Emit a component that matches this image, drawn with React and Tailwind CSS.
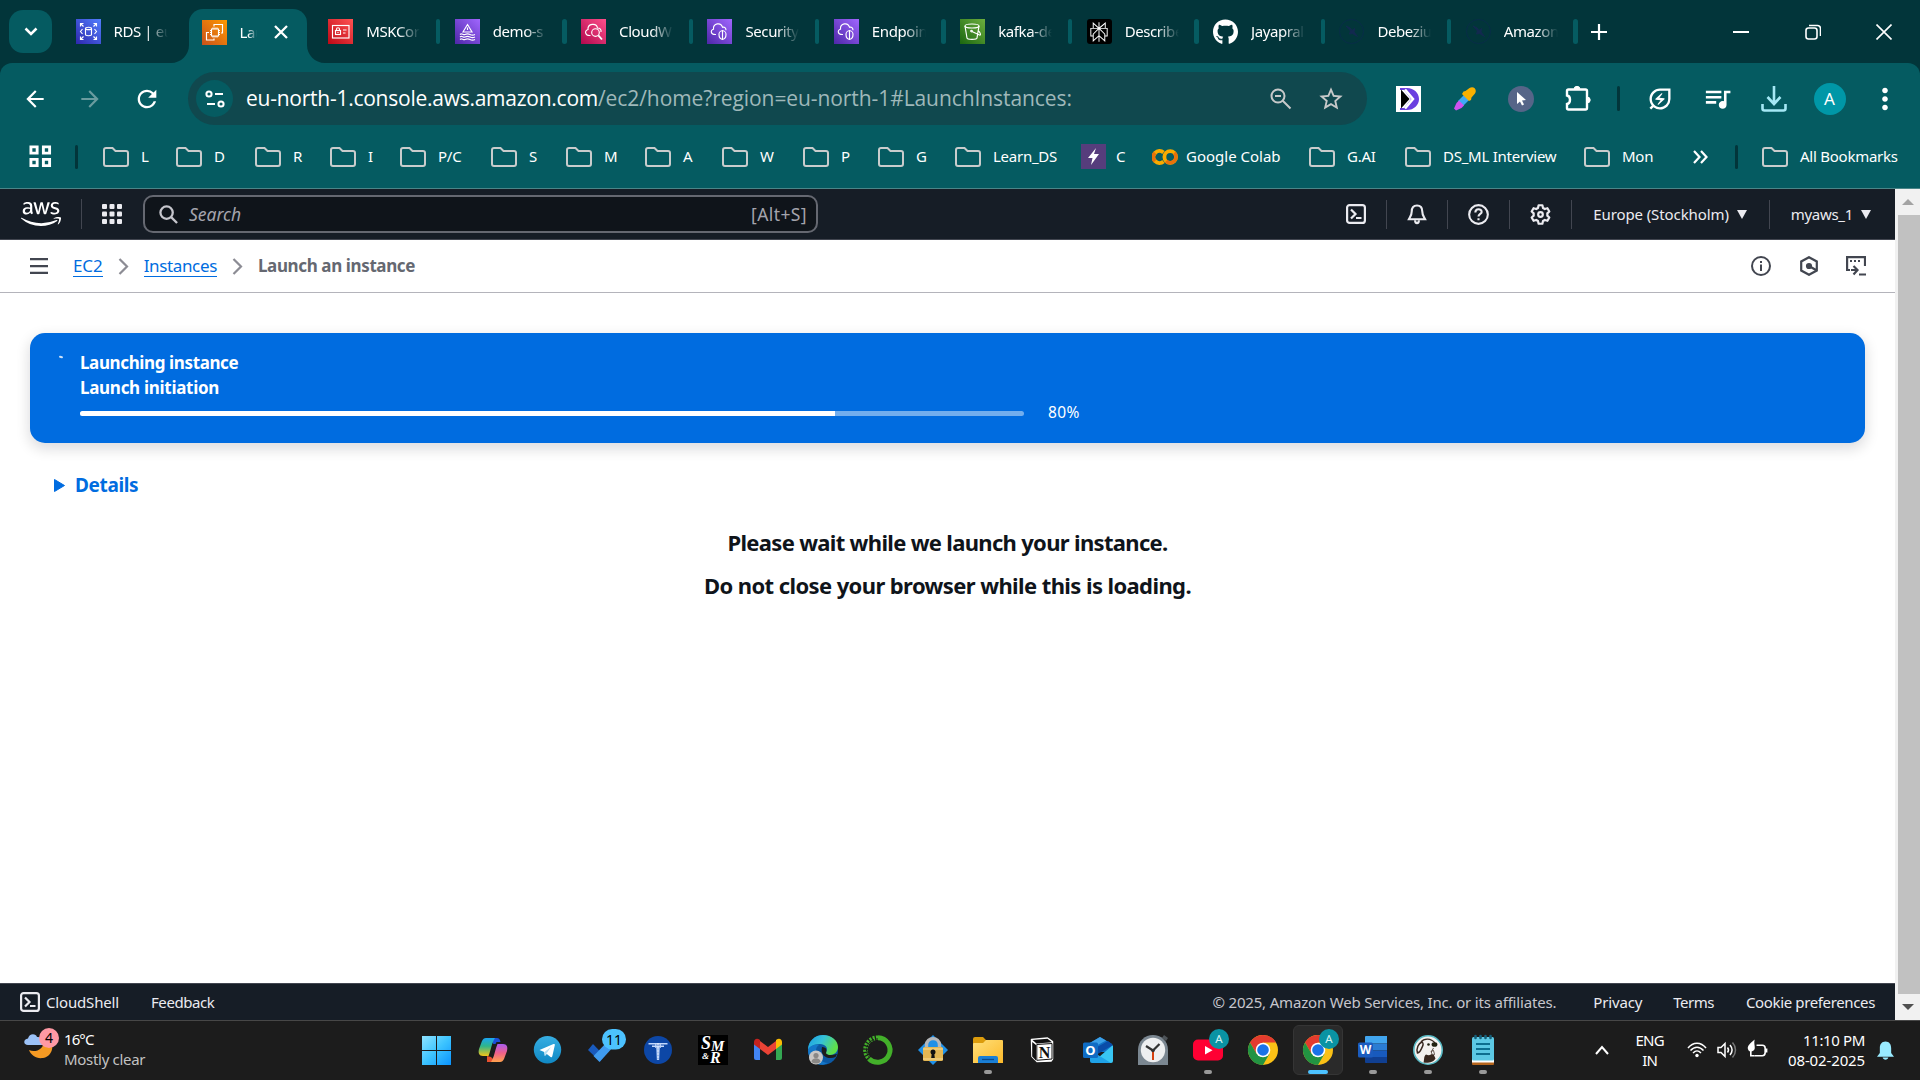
import {
  MdArrowBack,
  MdArrowForward,
  MdRefresh,
  MdStarBorder,
  MdOutlineEnergySavingsLeaf,
  MdQueueMusic,
  MdMoreVert,
} from "react-icons/md";
import { FaAws, FaGithub } from "react-icons/fa";
import { SiPerplexity } from "react-icons/si";

/* ---------- tab favicons ---------- */

function Tile({ from, to, children }) {
  return (
    <svg viewBox="0 0 25 25" className="h-[25px] w-[25px]" fill="none" stroke="#fff" strokeWidth="1.15">
      <defs>
        <linearGradient id={"g" + from.slice(1)} x1="0" y1="1" x2="1" y2="0">
          <stop offset="0" stopColor={from} />
          <stop offset="1" stopColor={to} />
        </linearGradient>
      </defs>
      <rect width="25" height="25" fill={`url(#g${from.slice(1)})`} stroke="none" />
      {children}
    </svg>
  );
}

const RdsIcon = () => (
  <Tile from="#2E27AD" to="#527FFF">
    <ellipse cx="12.5" cy="9.4" rx="3" ry="1.2" />
    <path d="M9.500 9.400v6.200c0 1.500 6 1.500 6 0V9.400M4.500 7.500v-3h3M4.500 4.500l3 3M17.500 4.500h3v3M20.500 4.500l-3 3M4.500 17.500v3h3M4.500 20.500l3-3M17.500 20.500h3v-3M20.500 20.500l-3-3M6.500 10l-2 2.500 2 2.500M18.500 10l2 2.500-2 2.500" />
  </Tile>
);
const Ec2Icon = () => (
  <Tile from="#C8511B" to="#FF9900">
    <path d="M9.500 9h7v7h-7zM11 7.500V9M13 7.500V9M15 7.500V9M11 16v1.500M13 16v1.500M15 16v1.500M8 10.500h1.500M8 12.500h1.500M8 14.500h1.500M16.500 10.500H18M16.500 12.500H18M16.500 14.500H18" />
    <path d="M12 6.500v-2h8.500V13H19M7 12.500H4.500V20H12v-1.500" />
  </Tile>
);
const IamIcon = () => (
  <Tile from="#BD0816" to="#FF5252">
    <rect x="4.500" y="6.500" width="16.500" height="12.500" />
    <rect x="7.500" y="11.500" width="5" height="4" />
    <path d="M8.500 11.500V10c0-1.700 3-1.700 3 0v1.500M15 11h3.500M15 14h2.500M10 13v1" />
  </Tile>
);
const MskIcon = () => (
  <Tile from="#4D27A8" to="#A166FF">
    <path d="M12.500 5.500l4.500 7.500H8zM12.500 8.500V11M5 15.500c2-2 3 1 5 0s3-1 5 0 3 1 5 0M5 18c2-2 3 1 5 0s3-1 5 0 3 1 5 0M5 20.500c2-2 3 1 5 0s3-1 5 0 3 1 5 0" />
  </Tile>
);
const CloudWatchIcon = () => (
  <Tile from="#B0084D" to="#FF4F8B">
    <path d="M9.500 16.500C4 17 3 11.500 7 10.500c-.5-6 8.500-7 9.500-1.500 2.500 0 4 1.500 3.500 4" />
    <circle cx="14.500" cy="13.500" r="3.800" />
    <path d="M17.300 16.300l3.700 4.200" strokeWidth="1.800" />
  </Tile>
);
const VpcIcon = () => (
  <Tile from="#4D27A8" to="#A166FF">
    <path d="M9 15.500C3.500 16 3 11 6.500 10.200 6 4 14 3 15.500 8.200c2-.6 3.500.8 3.500 3" />
    <path d="M15.500 11.500c3 .8 3.500 1.500 3.500 4 0 3-1.500 4.500-3.500 5-2-.5-3.500-2-3.500-5 0-2.500.5-3.200 3.500-4zM15.500 11.500v9" />
  </Tile>
);
const S3Icon = () => (
  <Tile from="#1B660F" to="#6CAE3E">
    <ellipse cx="12" cy="7" rx="7" ry="2" />
    <path d="M5 7l2 12c0 1.800 10 1.800 10 0l2-12M12 12.500l7.500 3.500c2 .5.500-3-1-4" />
    <circle cx="11.500" cy="12" r=".8" />
  </Tile>
);
const PerplexityIcon = () => (
  <div className="flex h-[25px] w-[25px] items-center justify-center rounded-[3px] bg-black">
    <SiPerplexity className="h-5 w-5 text-white" />
  </div>
);
const GithubIcon = () => <FaGithub className="h-[26px] w-[26px] text-white" />;
const FaintIcon = () => (
  <svg viewBox="0 0 25 25" className="h-[25px] w-[25px]" fill="none" stroke="#082d48" strokeWidth="1">
    <circle cx="12.500" cy="12.500" r="12" />
    <path d="M7 7l4 2 2 2.500 2.500-2-.5 3.500 3.500 4.500-5-3-3 .5 1-3z" fill="#12294f" stroke="#12294f" />
  </svg>
);

const TABS = [
  { icon: RdsIcon, label: "RDS | eu" },
  { icon: Ec2Icon, label: "Lau", active: true },
  { icon: IamIcon, label: "MSKCor", sep: true },
  { icon: MskIcon, label: "demo-s", sep: true },
  { icon: CloudWatchIcon, label: "CloudW", sep: true },
  { icon: VpcIcon, label: "Security", sep: true },
  { icon: VpcIcon, label: "Endpoin", sep: true },
  { icon: S3Icon, label: "kafka-de", sep: true },
  { icon: PerplexityIcon, label: "Describe", sep: true },
  { icon: GithubIcon, label: "Jayapral", sep: true },
  { icon: FaintIcon, label: "Debeziu", sep: true },
  { icon: FaintIcon, label: "Amazon", sep: true },
];

function Tab({ icon: Icon, label, active, sep }) {
  if (active) {
    return (
      <div className="relative flex h-full w-[126.400px] shrink-0 pt-[9px]">
        <div className="flex h-[54px] w-[118px] items-center rounded-t-[14px] bg-[#055b61] pb-[8px] pl-[13.600px]">
          <Icon />
          <div className="ml-3 w-[18px] overflow-hidden whitespace-nowrap [mask-image:linear-gradient(to_right,black_50%,transparent)]">
            {label}
          </div>
          <svg viewBox="0 0 14 14" className="ml-[17px] h-[14px] w-[14px]" stroke="#fff" strokeWidth="2.300">
            <path d="M1 1l12 12M13 1L1 13" />
          </svg>
        </div>
        <svg viewBox="0 0 18 18" className="absolute bottom-0 -left-[18px] h-[18px] w-[18px]" fill="#055b61">
          <path d="M18 0v18H0C10 18 18 10 18 0z" />
        </svg>
        <svg viewBox="0 0 18 18" className="absolute bottom-0 left-[118px] h-[18px] w-[18px]" fill="#055b61">
          <path d="M0 0v18h18C8 18 0 10 0 0z" />
        </svg>
      </div>
    );
  }
  return (
    <div className="flex h-full w-[126.400px] shrink-0 items-center pl-[13px]">
      <div className="flex w-[25px] justify-center">
        <Icon />
      </div>
      <div className="ml-[13px] w-[54px] overflow-hidden whitespace-nowrap [mask-image:linear-gradient(to_right,black_60%,transparent)]">
        {label}
      </div>
      {sep && <div className="ml-[15.500px] h-[25px] w-[4.500px] rounded-sm bg-[#055b61]" />}
    </div>
  );
}

function TabStrip() {
  return (
    <div className="flex h-[63px] items-center bg-[#02353a] text-[15px] tracking-[-0.4px]">
      <div className="ml-[9px] flex h-[43px] w-[43px] shrink-0 items-center justify-center rounded-[14px] bg-[#055b61]">
        <svg viewBox="0 0 14 9" className="h-[9px] w-[14px]" fill="none" stroke="#fff" strokeWidth="2.500">
          <path d="M1.500 1.500L7 7l5.500-5.500" />
        </svg>
      </div>
      <div className="ml-[10.500px] flex h-full">
        {TABS.map((t) => (
          <Tab key={t.label} {...t} />
        ))}
      </div>
      <svg viewBox="0 0 16 16" className="ml-[12px] h-[16px] w-[16px]" stroke="#fff" strokeWidth="2.200">
        <path d="M8 0v16M0 8h16" />
      </svg>
      <div className="mr-[28px] ml-auto flex items-center">
        <svg viewBox="0 0 16 2" className="h-[2px] w-[16px]" fill="#fff">
          <rect width="16" height="2" />
        </svg>
        <svg viewBox="0 0 16 16" className="ml-[56px] h-[16px] w-[16px]" fill="none" stroke="#fff" strokeWidth="1.600">
          <rect x="1" y="4" width="11" height="11" rx="2.500" />
          <path d="M4 1.500h8.500a3 3 0 0 1 3 3V12" />
        </svg>
        <svg viewBox="0 0 16 16" className="ml-[55px] h-[16px] w-[16px]" stroke="#fff" strokeWidth="1.600">
          <path d="M.5.5l15 15M15.500.5l-15 15" />
        </svg>
      </div>
    </div>
  );
}

/* ---------- address bar ---------- */

function Toolbar() {
  return (
    <div className="bg-[#02353a]">
      <div className="flex h-[71px] items-center rounded-t-[12px] bg-[#055b61] text-white">
        <MdArrowBack className="ml-[22px] h-[26px] w-[26px]" />
        <MdArrowForward className="ml-[29px] h-[26px] w-[26px] text-[#6a9c9f]" />
        <MdRefresh className="ml-[30px] h-[28px] w-[28px]" />
        <div className="ml-[27px] flex h-[53px] w-[1179px] items-center rounded-full bg-[#10484e]">
          <div className="ml-2 flex h-[37px] w-[37px] items-center justify-center rounded-full bg-[#055b61]">
            <svg viewBox="0 0 20 18" className="h-[18px] w-[20px]" fill="none" stroke="#fff" strokeWidth="2">
              <circle cx="4" cy="4" r="2.600" />
              <path d="M10 4h8M2 14h8" />
              <circle cx="16" cy="14" r="2.600" />
            </svg>
          </div>
          <div className="ml-[13px] font-['Open_Sans',sans-serif] text-[21px] whitespace-nowrap">
            <span className="tracking-[-0.25px]">eu-north-1.console.aws.amazon.com</span>
            <span className="tracking-[-0.08px] text-[#9fb8ba]">/ec2/home?region=eu-north-1#LaunchInstances:</span>
          </div>
          <svg viewBox="0 0 24 24" className="ml-auto h-[24px] w-[24px]" fill="none" stroke="#c7c9c9" strokeWidth="2">
            <circle cx="9" cy="9" r="6.500" />
            <path d="M13.500 13.500l8 8M6 9h6" />
          </svg>
          <MdStarBorder className="mr-[22px] ml-[24.500px] h-[28px] w-[28px] text-[#c7c9c9]" />
        </div>
        <svg viewBox="0 0 25 26" className="ml-[29px] h-[26px] w-[25px]">
          <rect width="25" height="26" fill="#fff" />
          <path d="M4 2h7c7 0 12 5 12 11s-5 11-12 11H4V22h4l7-9-7-9H4z" fill="#6b3fe0" />
          <path d="M9 3.500l8 9.500-8 9.500" fill="none" stroke="#fff" strokeWidth="2.500" />
          <path d="M5 3.500L13.500 13 5 22.500z" fill="#000" />
        </svg>
        <svg viewBox="0 0 24 24" className="ml-[32px] h-[24px] w-[24px]">
          <path d="M5 14l7-7 5 5-7 7z" fill="#3fa9f5" />
          <path d="M3.500 16l2.500-2.500 5 5L8.500 21 3 23.500l-2-2z" fill="#cf52f0" />
          <path d="M10.500 4.500l2-.5 4-3c4-2.500 8 1.500 5.500 5.500l-3.500 4-.5 2.500-2 1-7-7z" fill="#f9b000" />
        </svg>
        <svg viewBox="0 0 26 26" className="ml-[31px] h-[26px] w-[26px]">
          <circle cx="13" cy="13" r="13" fill="#566588" />
          <path d="M9 6v12l3-2.500 2 4 2-1-2-4 4-.5z" fill="#fff" />
        </svg>
        <svg viewBox="0 0 28 28" className="ml-[30px] h-[28px] w-[28px]" fill="none" stroke="#fff" strokeWidth="2.400">
          <path d="M3 6q0-1.500 1.500-1.500h17Q23 4.500 23 6v17q0 1.500-1.500 1.500h-17Q3 24.500 3 23v-4c4-.5 4-8 0-8.500z" />
          <path d="M10 4.500a3 3.200 0 0 1 6 0zM23 12a3.200 3 0 0 1 0 6z" fill="#fff" strokeWidth="1" />
        </svg>
        <div className="ml-[25px] h-[25px] w-[3px] rounded bg-[#02353a]" />
        <MdOutlineEnergySavingsLeaf className="ml-[26px] h-[28px] w-[28px]" />
        <MdQueueMusic className="ml-[28px] h-[31px] w-[31px]" />
        <svg viewBox="0 0 26 26" className="ml-[27.500px] h-[26px] w-[26px]" fill="none" stroke="#a5e8f5" strokeWidth="2.600">
          <path d="M13 0v17M6.500 11l6.500 7 6.500-7M1.500 18v4.500q0 2 2 2h19q2 0 2-2V18" />
        </svg>
        <div className="ml-[27px] flex h-[32px] w-[32px] items-center justify-center rounded-full bg-[#0097a7] text-[17px]">
          A
        </div>
        <MdMoreVert className="ml-[21.500px] h-[34px] w-[36px]" />
      </div>
    </div>
  );
}

/* ---------- bookmarks ---------- */

const FolderIcon = () => (
  <svg viewBox="0 0 26 20" className="h-[20px] w-[26px] shrink-0" fill="none" stroke="#c9cccc" strokeWidth="2">
    <path d="M1 3q0-2 2-2h6.500l3 3H23q2 0 2 2v11q0 2-2 2H3q-2 0-2-2z" />
  </svg>
);
const BoltIcon = () => (
  <svg viewBox="0 0 25 25" className="h-[25px] w-[25px] shrink-0">
    <rect width="25" height="25" fill="#563d7c" />
    <path d="M15 4L7 14h4.500L10 21l8-11h-5z" fill="#fff" />
  </svg>
);
const ColabIcon = () => (
  <svg viewBox="0 0 26 16" className="h-[16px] w-[26px] shrink-0" fill="none" strokeWidth="3.800">
    <path d="M11.500 3.500A6 6 0 1 0 11.500 12.500" stroke="#f9ab00" />
    <circle cx="18.200" cy="8" r="5.800" stroke="#f9ab00" />
    <path d="M22.300 3.900a5.800 5.800 0 0 1-8.200 8.200M3 3.900a5.800 5.800 0 0 0 0 8.200" stroke="#e8710a" />
  </svg>
);

const BOOKMARKS = [
  ["L", "w-[73px]"],
  ["D", "w-[79px]"],
  ["R", "w-[75px]"],
  ["I", "w-[70px]"],
  ["P/C", "w-[91px]"],
  ["S", "w-[75px]"],
  ["M", "w-[79px]"],
  ["A", "w-[77px]"],
  ["W", "w-[81px]"],
  ["P", "w-[75px]"],
  ["G", "w-[77px]"],
  ["Learn_DS", "w-[126px]"],
  ["C", "w-[71px]", BoltIcon, "gap-[10px]"],
  ["Google Colab", "w-[157px] tracking-[0px]", ColabIcon, "gap-[8px]"],
  ["G.AI", "w-[96px]"],
  ["DS_ML Interview", "w-[179px]"],
  ["Mon", "w-[109px]"],
];

function Bookmarks() {
  return (
    <div className="flex h-[55px] items-center border-b border-[#4a8588] bg-[#055b61] pb-[9px] text-[15px] tracking-[-0.25px]">
      <svg viewBox="0 0 24 24" className="ml-[29px] h-[23px] w-[23px] shrink-0" fill="none" stroke="#fff" strokeWidth="3">
        <path d="M2 2h6.500v6.500H2zM15 2h6.500v6.500H15zM2 15h6.500v6.500H2zM15 15h6.500v6.500H15z" />
      </svg>
      <div className="mr-[25px] ml-[23px] h-[24px] w-[3px] shrink-0 rounded bg-[#02353a]" />
      {BOOKMARKS.map(([label, width, Icon = FolderIcon, gap = "gap-[12px]"]) => (
        <div key={label} className={`flex shrink-0 items-center whitespace-nowrap ${width} ${gap}`}>
          <Icon />
          <span>{label}</span>
        </div>
      ))}
      <svg viewBox="0 0 15 14" className="h-[14px] w-[15px] shrink-0" fill="none" stroke="#fff" strokeWidth="2.200">
        <path d="M1 1l5.500 6L1 13M8 1l5.500 6L8 13" />
      </svg>
      <div className="ml-[27px] h-[24px] w-[3px] shrink-0 rounded bg-[#02353a]" />
      <div className="ml-[24px] flex items-center gap-[12px] whitespace-nowrap">
        <FolderIcon />
        <span>All Bookmarks</span>
      </div>
    </div>
  );
}

/* ---------- AWS console ---------- */

const CloudShellIcon = ({ className }) => (
  <svg viewBox="0 0 20 20" className={className} fill="none" stroke="#ebebf0" strokeWidth="2.200">
    <rect x="1.100" y="1.100" width="17.800" height="17.800" rx="2.500" />
    <path d="M5 5.500l4.500 4.500L5 14.500M10 14h5.500" />
  </svg>
);
const Caret = () => (
  <svg viewBox="0 0 10 9" className="h-[9px] w-[10px]" fill="#ebebf0">
    <path d="M0 0h10L5 9z" />
  </svg>
);
const Divider = () => <div className="h-[29px] w-px shrink-0 bg-[#424650]" />;

function ConsoleHeader() {
  return (
    <div className="flex h-[51px] shrink-0 items-center border-b border-[#424650] bg-[#161d26] text-[#ebebf0]">
      <FaAws className="ml-[21px] h-[40px] w-[40px] shrink-0 text-white" />
      <div className="ml-[20px] h-[30px] w-px bg-[#424650]" />
      <svg viewBox="0 0 20 20" className="ml-[20px] h-[20px] w-[20px] shrink-0" fill="#ebebf0">
        {[0, 7.5, 15].map((y) =>
          [0, 7.5, 15].map((x) => <rect key={x + "-" + y} x={x} y={y} width="5" height="5" rx="1" />)
        )}
      </svg>
      <div className="ml-[21px] flex h-[38px] w-[675px] shrink-0 items-center rounded-[10px] border-2 border-[#656871] bg-[#0f141a]">
        <svg viewBox="0 0 20 20" className="ml-[14px] h-[19px] w-[19px]" fill="none" stroke="#c6c6cd" strokeWidth="2.400">
          <circle cx="8" cy="8" r="6.500" />
          <path d="M12.500 12.500l6.500 6.500" />
        </svg>
        <span className="ml-[11px] text-[17.500px] text-[#a4a4ad] italic">Search</span>
        <span className="mr-[9px] ml-auto text-[17.500px] tracking-[0.4px] text-[#a4a4ad]">[Alt+S]</span>
      </div>
      <div className="mr-[24px] ml-auto flex items-center">
        <CloudShellIcon className="h-[20px] w-[20px]" />
        <div className="w-[20px]" />
        <Divider />
        <svg viewBox="0 0 20 22" className="mx-[20px] h-[21px] w-[20px]" fill="none" stroke="#ebebf0" strokeWidth="2.200">
          <path d="M10 1.500c-4 0-5.500 2.500-5.500 6 0 4-1.500 5.500-3 8.500h17c-1.500-3-3-4.500-3-8.500 0-3.500-1.500-6-5.500-6z" />
          <path d="M8 17c0 4 4 4 4 0" />
        </svg>
        <Divider />
        <svg viewBox="0 0 20 20" className="mx-[20px] h-[21px] w-[21px]" fill="none" stroke="#ebebf0" strokeWidth="2">
          <circle cx="10" cy="10" r="8.900" />
          <path d="M7 8c0-4 6-4 6-.5 0 2-3 2-3 4.500M10 13.500v2" />
        </svg>
        <Divider />
        <svg viewBox="0 0 20 20" className="mx-[20px] h-[21px] w-[21px]" fill="none" stroke="#ebebf0" strokeWidth="2.100" strokeLinejoin="round">
          <path d="M8.200 1.200h3.600l.6 2.600 1.700 1 2.500-.8 1.800 3.100-1.900 1.800v2.200l1.900 1.800-1.800 3.100-2.500-.8-1.700 1-.6 2.600H8.200l-.6-2.600-1.700-1-2.500.8-1.800-3.100 1.900-1.800V8.900L1.600 7.100 3.400 4l2.500.8 1.700-1z" />
          <circle cx="10" cy="10" r="2.200" />
        </svg>
        <Divider />
        <span className="mr-[8px] ml-[21px] text-[15px] tracking-[-0.1px]">Europe (Stockholm)</span>
        <Caret />
        <div className="w-[22px]" />
        <Divider />
        <span className="mr-[8px] ml-[21px] text-[15px] tracking-[-0.3px]">myaws_1</span>
        <Caret />
      </div>
    </div>
  );
}

const Crumb = () => (
  <svg viewBox="0 0 11 17" className="mx-[15px] h-[17px] w-[11px]" fill="none" stroke="#8c8c94" strokeWidth="2.200">
    <path d="M1.500 1l7.500 7.500L1.500 16" />
  </svg>
);

function Breadcrumbs() {
  return (
    <div className="flex h-[53px] shrink-0 items-center border-b border-[#b4b4bb] bg-white text-[17px]">
      <svg viewBox="0 0 18 16" className="ml-[30px] h-[16px] w-[18px]" fill="#424650">
        <path d="M0 0h18v2.200H0zM0 7h18v2.200H0zM0 13.800h18V16H0z" />
      </svg>
      <span className="ml-[25px] border-b border-[#006ce0] leading-[21px] tracking-[-0.1px] text-[#006ce0]">EC2</span>
      <Crumb />
      <span className="border-b border-[#006ce0] leading-[21px] tracking-[-0.35px] text-[#006ce0]">Instances</span>
      <Crumb />
      <span className="font-bold tracking-[-0.38px] text-[#656871]">Launch an instance</span>
      <div className="mr-[29px] ml-auto flex items-center">
        <svg viewBox="0 0 20 20" className="h-[20px] w-[20px]" fill="none" stroke="#424650" strokeWidth="2">
          <circle cx="10" cy="10" r="9" />
          <path d="M10 8.500V15M10 5v2" />
        </svg>
        <svg viewBox="0 0 20 20" className="ml-[28px] h-[20px] w-[20px]" fill="none" stroke="#424650" strokeWidth="2.200">
          <path d="M10 1.200l7.800 4.300v9L10 18.800l-7.800-4.300v-9z" />
          <circle cx="10" cy="10" r="2" fill="#424650" />
          <path d="M10 10l7 4" />
        </svg>
        <svg viewBox="0 0 20 20" className="ml-[27px] h-[20px] w-[20px]" fill="none" stroke="#424650" strokeWidth="2.200">
          <path d="M19 10V1.100H1.100V14H4M4 5h2M8 5h2M12 5h2M5 14h6M7.500 10l4 4-4 4.500M13 18.500h7" />
        </svg>
      </div>
    </div>
  );
}

function LaunchProgress() {
  const percent = 80;
  return (
    <div className="mt-[40px] mr-[30px] ml-[30px] h-[110px] shrink-0 rounded-[15px] bg-[#006ce0] pl-[50px] text-white shadow-[0_5px_14px_1px_rgba(0,7,22,0.14)]">
      <div className="relative pt-[17px] text-[17px] leading-[25px] font-bold">
        <div className="absolute top-[23px] -left-[21px] h-[2px] w-[4px] rotate-12 rounded bg-white/80" />
        <div className="tracking-[-0.38px]">Launching instance</div>
        <div className="tracking-[-0.29px]">Launch initiation</div>
      </div>
      <div className="flex items-center gap-[24px]">
        <div className="mt-px h-[5px] w-[944px] overflow-hidden rounded-full bg-[#72aeee]">
          <div className="h-full bg-white" style={{ width: percent + "%" }} />
        </div>
        <span className="text-[15.500px] leading-[25px] tracking-[0.4px]">{percent}%</span>
      </div>
    </div>
  );
}

function Console() {
  return (
    <div className="flex h-[831px]">
      <div className="flex w-[1895px] flex-col bg-white">
        <ConsoleHeader />
        <Breadcrumbs />
        <LaunchProgress />
        <div className="mt-[28px] ml-[54px] flex items-center gap-[10px] text-[19px] leading-[28px] font-bold tracking-[-0.35px] text-[#006ce0]">
          <svg viewBox="0 0 11 13" className="mt-px h-[13px] w-[11px]" fill="#006ce0" stroke="#006ce0" strokeLinejoin="round">
            <path d="M.5.5v12l10-6z" />
          </svg>
          Details
        </div>
        <div className="mt-[22px] flex flex-col items-center text-[22px] leading-[43px] font-bold text-[#0f141a]">
          <div className="tracking-[-0.68px]">Please wait while we launch your instance.</div>
          <div className="tracking-[-0.6px]">Do not close your browser while this is loading.</div>
        </div>
        <div className="mt-auto flex h-[37px] items-center border-t border-[#424650] bg-[#161d26] text-[15px] text-[#ebebf0]">
          <CloudShellIcon className="ml-[20px] h-[20px] w-[20px]" />
          <span className="ml-[6px] tracking-[-0.16px]">CloudShell</span>
          <span className="ml-[32px] tracking-[-0.45px]">Feedback</span>
          <div className="mr-[20px] ml-auto flex">
            <span className="tracking-[-0.18px] text-[#c6c6cd]">© 2025, Amazon Web Services, Inc. or its affiliates.</span>
            <span className="ml-[37px] tracking-[-0.15px]">Privacy</span>
            <span className="ml-[31px] tracking-[-0.5px]">Terms</span>
            <span className="ml-[32px] tracking-[-0.36px]">Cookie preferences</span>
          </div>
        </div>
      </div>
      <div className="flex w-[25px] flex-col items-center bg-[#f1f1f1]">
        <div className="flex h-[26px] items-center justify-center">
          <svg viewBox="0 0 12 6" className="h-[6px] w-[12px]" fill="#a3a3a3">
            <path d="M0 6h12L6 0z" />
          </svg>
        </div>
        <div className="ml-[2px] h-[779px] w-[22px] bg-[#c1c1c1]" />
        <div className="flex h-[26px] items-center justify-center">
          <svg viewBox="0 0 12 6" className="h-[6px] w-[12px]" fill="#505050">
            <path d="M0 0h12L6 6z" />
          </svg>
        </div>
      </div>
    </div>
  );
}

/* ---------- taskbar icons (30 × 30) ---------- */

const I = ({ children }) => (
  <svg viewBox="0 0 30 30" className="h-[30px] w-[30px] overflow-visible">
    {children}
  </svg>
);

const WindowsIcon = () => (
  <I>
    <linearGradient id="win" x1="0" y1="0" x2="1" y2="1">
      <stop offset="0" stopColor="#8fe3ff" />
      <stop offset=".5" stopColor="#3dc4ff" />
      <stop offset="1" stopColor="#0a93ff" />
    </linearGradient>
    <path d="M-1 1h14v14H-1zM14 1h14v14H14zM-1 16h14v14H-1zM14 16h14v14H14z" fill="url(#win)" />
  </I>
);
const CopilotIcon = () => (
  <I>
    <linearGradient id="cpa" x1="0" y1="0" x2="0" y2="1">
      <stop offset="0" stopColor="#1ba5f2" />
      <stop offset=".45" stopColor="#2eb58b" />
      <stop offset="1" stopColor="#f5c518" />
    </linearGradient>
    <linearGradient id="cpb" x1="0" y1="0" x2="0" y2="1">
      <stop offset="0" stopColor="#a95cf0" />
      <stop offset=".5" stopColor="#f0608a" />
      <stop offset="1" stopColor="#ffa24d" />
    </linearGradient>
    <path d="M12 3h7c2 0 3 1.500 3.500 4h-4l-2 4z" fill="#1b4fd8" />
    <path d="M9 27h9l-5-5-4-1z" fill="#e8502f" />
    <path d="M8 3h9c-3 4-4 12-6.500 18H5c-4 0-5-3-4-7L4 6c1-2 2-3 4-3z" fill="url(#cpa)" />
    <path d="M22 27h-9c3-4 4-12 6.500-18H25c4 0 5 3 4 7l-3 8c-1 2-2 3-4 3z" fill="url(#cpb)" />
    <path d="M15 9h4c-2 4-3 8-4.500 12H11.500z" fill="#1c1c1c" />
  </I>
);
const TelegramIcon = () => (
  <I>
    <linearGradient id="tg" x1="0" y1="0" x2="0" y2="1">
      <stop offset="0" stopColor="#37aee2" />
      <stop offset="1" stopColor="#1088c4" />
    </linearGradient>
    <circle cx="14.500" cy="14.700" r="13.700" fill="url(#tg)" />
    <path d="M6.500 15l14-6c1-.3 1.500.2 1.300 1.300l-2.500 11c-.3 1-.9 1-1.700.6l-3.800-2.800-2 2-.6-4z" fill="#fff" />
    <path d="M11.500 17l6.500-5-4.500 6.500-1.600 2.500z" fill="#b8dff2" />
  </I>
);
const TodoIcon = () => (
  <I>
    <path d="M0 15l5-6 11.500 12L12 26.500z" fill="#195abd" />
    <path d="M11.500 27l-6-6L21 5l6 5z" fill="#3f9bf0" />
    <rect x="14" y="-6" width="24" height="20.500" rx="10.200" fill="#4cc2ff" />
    <text x="26" y="9.500" fontSize="14" fill="#000" textAnchor="middle">11</text>
  </I>
);
const TIcon = () => (
  <I>
    <circle cx="15" cy="15" r="14" fill="#0d47a6" />
    <path d="M5.500 8.800h19M9 11.300h12" stroke="#c3d8fb" strokeWidth="1.500" />
    <path d="M12.800 8v5M17.200 8v5" stroke="#c3d8fb" strokeWidth="1.200" />
    <path d="M13 12h4l-.8 13h-2.400z" fill="#8fb2ea" />
    <path d="M15 8v17" stroke="#e8f0ff" strokeWidth="1.200" strokeDasharray="2.500 .7" />
  </I>
);
const SmrIcon = () => (
  <I>
    <rect width="30" height="30" fill="#000" />
    <g fill="#fff" fontFamily="Liberation Serif, serif" fontStyle="italic" fontWeight="700">
      <text x="3" y="14" fontSize="18">S</text>
      <text x="13" y="16" fontSize="15">M</text>
      <text x="4" y="24" fontSize="9">&amp;</text>
      <text x="12" y="28" fontSize="16">R</text>
    </g>
  </I>
);
const GmailIcon = () => (
  <I>
    <path d="M1 8v15q0 2 2 2h4V12z" fill="#4285f4" />
    <path d="M29 8v15q0 2-2 2h-4V12z" fill="#34a853" />
    <path d="M7 6v8l8 6 8-6V6l-8 6z" fill="#ea4335" />
    <path d="M1 7c0-3 3-4.500 6-2v9l-6-4.500z" fill="#c5221f" />
    <path d="M29 7c0-3-3-4.500-6-2v9l6-4.500z" fill="#fbbc04" />
  </I>
);
const EdgeIcon = () => (
  <I>
    <linearGradient id="edge" x1="0" y1="0" x2="1" y2=".4">
      <stop offset="0" stopColor="#1b9de2" />
      <stop offset=".5" stopColor="#35c1d8" />
      <stop offset="1" stopColor="#5fe04a" />
    </linearGradient>
    <circle cx="15" cy="15" r="15" fill="#0c59a4" />
    <path d="M0 15C0 6 7 0 15 0c9 0 15 6 15 12 0 5-4 8-8 8-3 0-5-1-4-3 3-4-1-8-6-8C6 9 1 12 0 15z" fill="url(#edge)" />
    <path d="M0 15c2-5 7-6 11-5-4 2-4 9 0 13 2 3 6 5 9 5-9 5-20-1-20-13z" fill="#1477c9" />
    <path d="M14 12c5 0 5 4 4 6 1 3 7 2 11 1l-1.500 3c-6 3-16 0-13.500-10z" fill="#1c1c1c" />
    <circle cx="8" cy="22.500" r="7" fill="#c9c7c5" />
    <circle cx="8" cy="20.500" r="2.600" fill="#8a8886" />
    <path d="M3.500 27c0-5 9-5 9 0-3 2-6 2-9 0z" fill="#8a8886" />
  </I>
);
const AnacondaIcon = () => (
  <I>
    <path d="M15 2.700A12.300 12.300 0 1 1 6 23.700" fill="none" stroke="#43b02a" strokeWidth="5" />
    <path d="M15 2.700A12.300 12.300 0 0 0 6 23.700" fill="none" stroke="#43b02a" strokeWidth="4.500" strokeDasharray="2 1.200" />
    <path d="M15 4A11 11 0 0 0 6 22" fill="none" stroke="#1c1c1c" strokeWidth="1" strokeDasharray="3 1" />
  </I>
);
const LockIcon = () => (
  <I>
    <path d="M15 0l15 15-15 15L0 15z" fill="#1e90e8" />
    <path d="M8.500 13V10c0-8.500 13-8.500 13 0v3" fill="none" stroke="#b4b7ba" strokeWidth="3.400" />
    <rect x="5" y="12" width="20" height="14" rx="1.500" fill="#e3b754" />
    <path d="M5 14h20M5 24h20" stroke="#f7dc93" strokeWidth="1.200" />
    <circle cx="15" cy="17" r="2.500" fill="#111" />
    <path d="M13.800 18h2.400l.6 5h-3.600z" fill="#111" />
  </I>
);
const ExplorerIcon = () => (
  <I>
    <linearGradient id="fold" x1="0" y1="0" x2="1" y2="1">
      <stop offset="0" stopColor="#ffe07a" />
      <stop offset="1" stopColor="#fcb92a" />
    </linearGradient>
    <path d="M0 4q0-2 2-2h8l3 3h15v8H0z" fill="#dc9c0c" />
    <path d="M0 9q0-1 1-1h9l3-3h16q1 0 1 1v22H0z" fill="url(#fold)" />
    <path d="M5 28v-5q0-2 2-2h16q2 0 2 2v5z" fill="#1a7fd6" />
    <path d="M9 24.500h12" stroke="#0b4a8c" strokeWidth="1.300" />
  </I>
);
const NotionIcon = () => (
  <I>
    <path d="M3.500 4.500l16-1.500 5 3.500V24l-1.500 2-14 .5-5-5z" fill="#fff" stroke="#fff" strokeWidth="1.500" strokeLinejoin="round" />
    <path d="M4.500 5l4 3.500L24 7.300 19.500 3.800zM4.200 7v14.500l3.800 4V10z" fill="#111" />
    <path d="M8.800 9.500l15.200-1V24l-15.200 1.300z" fill="#fff" stroke="#111" strokeWidth="1" />
    <text x="16.500" y="22.500" fontSize="16" fontWeight="700" fill="#111" textAnchor="middle" fontFamily="Liberation Serif, serif">N</text>
  </I>
);
const OutlookIcon = () => (
  <I>
    <path d="M7 8l10-6 12 7v8H7z" fill="#1173c7" />
    <path d="M5 9l12-7 6 3.500L7 14z" fill="#3ba0e8" />
    <path d="M30 10v16q0 2-2 2H9z" fill="#38c6f4" />
    <path d="M30 10L13 20l-6-4 18-10z" fill="#0a4ca8" />
    <path d="M7 15l21 13H9q-2 0-2-2z" fill="#1fa2e8" />
    <rect y="7.500" width="15" height="15.500" rx="1.500" fill="#0f6cc4" />
    <text x="7.500" y="20" fontSize="13" fontWeight="700" fill="#fff" textAnchor="middle">O</text>
  </I>
);
const ClockIcon = () => (
  <I>
    <path d="M24 3l2-3 4 3-2 3z" fill="#4d5358" />
    <path d="M0 15C0 6 7 0 15 0s15 6 15 15v15H0z" fill="#7b8791" />
    <circle cx="15" cy="15" r="12.200" fill="#eeeff0" />
    <path d="M15 15.500L8 11M15 15.500L21.500 9" stroke="#333" strokeWidth="2.200" />
    <path d="M15 15.500V25" stroke="#d6410f" strokeWidth="2" />
    <circle cx="15" cy="15.500" r="1.800" fill="#333" />
  </I>
);
const ProfileDot = () => (
  <g>
    <circle cx="26" cy="4" r="10" fill="#0a93a3" />
    <text x="26" y="8.200" fontSize="11.500" fill="#d5f3f5" textAnchor="middle">A</text>
  </g>
);
const YoutubeIcon = () => (
  <I>
    <rect y="4.500" width="30" height="21" rx="5" fill="#ff0033" />
    <path d="M12 11v8.500l7.500-4.200z" fill="#fff" />
    <ProfileDot />
  </I>
);
const ChromeBase = () => (
  <g>
    <circle cx="15" cy="15" r="15" fill="#fbc116" />
    <path d="M15 7.500h13A15 15 0 0 0 2 7.500l6.500 11.300z" fill="#e33b2e" />
    <path d="M2 7.500A15 15 0 0 0 15 30l6.500-11.200L8.500 18.800z" fill="#229342" />
    <circle cx="15" cy="15" r="7.300" fill="#fff" />
    <circle cx="15" cy="15" r="5.800" fill="#1a73e8" />
  </g>
);
const ChromeIcon = () => (
  <I>
    <ChromeBase />
  </I>
);
const ChromeProfileIcon = () => (
  <I>
    <ChromeBase />
    <ProfileDot />
  </I>
);
const WordIcon = () => (
  <I>
    <path d="M7 2q0-1 1-1h21v7.500H7z" fill="#41a5ee" />
    <path d="M7 8.500h22v7H7z" fill="#2b7cd3" />
    <path d="M7 15.500h22v6.500H7z" fill="#185abd" />
    <path d="M7 22h22v6H8q-1 0-1-1z" fill="#103f91" />
    <rect y="7.500" width="15" height="15" rx="1.500" fill="#1b5cbe" />
    <text x="7.500" y="19.300" fontSize="12" fontWeight="700" fill="#fff" textAnchor="middle">W</text>
  </I>
);
const DBeaverIcon = () => (
  <I>
    <circle cx="15" cy="15" r="14.200" fill="#f4f2f0" stroke="#58b9c4" strokeWidth="1.600" />
    <path d="M10.500 27.500c1-3 0-6 2.500-8 3 1.500 5 .5 7-1.500l2.500 5.500c-2 4-8 5-12 4z" fill="#382820" />
    <path d="M4.500 18c-1.500-5 1-9.500 4.500-11 1.500 1 1 4-.5 6.500-.8 2-1.500 4-4 4.500z" fill="none" stroke="#382820" strokeWidth="1.500" />
    <path d="M8 7c3-4 10-4 14 1" fill="none" stroke="#382820" strokeWidth="1.400" />
    <circle cx="15.500" cy="9.500" r="1.300" fill="#221" />
    <ellipse cx="21.500" cy="9.500" rx="2.900" ry="2.300" fill="#221" />
    <path d="M20.500 13l-2 3.500M18 16.500l1.500 3.500 2-.5-1-4z" fill="#fff" stroke="#382820" strokeWidth=".8" />
  </I>
);
const NotepadIcon = () => (
  <I>
    <rect x="4" y="25" width="22" height="5" rx="1" fill="#b5651d" />
    <rect x="4" y="24" width="22" height="3.500" fill="#fff" />
    <rect x="4" y="2" width="22" height="23.500" rx="1.500" fill="#5cc8e4" />
    <path d="M7.500 1v2M12.500 1v2M17.500 1v2M22.500 1v2" stroke="#16607a" strokeWidth="2.600" strokeLinecap="round" />
    <path d="M8 9h14M8 14h14M8 19h14" stroke="#0d6e8f" strokeWidth="1.800" />
  </I>
);

const TASKS = [
  [WindowsIcon],
  [CopilotIcon],
  [TelegramIcon],
  [TodoIcon],
  [TIcon],
  [SmrIcon],
  [GmailIcon],
  [EdgeIcon],
  [AnacondaIcon],
  [LockIcon],
  [ExplorerIcon, "open"],
  [NotionIcon],
  [OutlookIcon],
  [ClockIcon],
  [YoutubeIcon, "open"],
  [ChromeIcon],
  [ChromeProfileIcon, "active"],
  [WordIcon, "open"],
  [DBeaverIcon, "open"],
  [NotepadIcon, "open"],
];

function Task({ icon: Icon, state }) {
  return (
    <div
      className={
        state === "active"
          ? "flex h-[50px] w-[50px] flex-col items-center rounded-md border border-[#353535] bg-[#2a2a2a] pt-[9px]"
          : "flex h-[50px] w-[50px] flex-col items-center pt-[10px]"
      }
    >
      <Icon />
      {state === "open" && <div className="mt-[5px] h-[4px] w-[8px] rounded-full bg-[#999]" />}
      {state === "active" && <div className="mt-[5px] h-[4px] w-[20px] rounded-full bg-[#4cc2ff]" />}
    </div>
  );
}

function Taskbar() {
  return (
    <div className="flex h-[60px] border-t border-[#474747] bg-[#1c1c1c] text-[15px] text-white">
      <div className="flex w-[413px] pl-[24px]">
        <svg viewBox="0 0 36 36" className="mt-[6px] h-[36px] w-[36px]">
          <path d="M5 23c6 3 15 0 16-11l4-1c7 9 2 19-6 20-7 1-12-3-14-8z" fill="#f59a23" />
          <path d="M4 18c-5 0-5-6 0-6.500C5 6 12 6 13 10c4 0 5 2 5 8z" fill="#9cc2f7" />
          <circle cx="25" cy="11" r="10" fill="#ff99a4" />
          <text x="25" y="16" fontSize="14" fill="#000" textAnchor="middle">4</text>
        </svg>
        <div className="mt-[8px] ml-[4px] leading-[20px]">
          <div className="tracking-[-0.9px]">16°C</div>
          <div className="tracking-[-0.3px] text-[#c2c2c2]">Mostly clear</div>
        </div>
      </div>
      <div className="flex gap-[5px] pt-[4px]">
        {TASKS.map(([icon, state], i) => (
          <Task key={i} icon={icon} state={state} />
        ))}
      </div>
      <div className="mr-[26px] ml-auto flex items-center pb-[2px]">
        <svg viewBox="0 0 14 10" className="h-[10px] w-[14px]" fill="none" stroke="#fff" strokeWidth="2">
          <path d="M1 9l6-7 6 7" />
        </svg>
        <div className="ml-[26px] text-center leading-[20px] tracking-[-0.7px]">
          <div>ENG</div>
          <div>IN</div>
        </div>
        <svg viewBox="0 0 20 17" className="ml-[23px] h-[17px] w-[20px]" fill="none" stroke="#fff" strokeWidth="1.500">
          <path d="M1 7c5-6.500 13-6.500 18 0M3.500 9.500c4-4.500 9-4.500 13 0M6 12c3-3 5-3 8 0" />
          <circle cx="10" cy="14.500" r="1.700" fill="#fff" stroke="none" />
        </svg>
        <svg viewBox="0 0 20 18" className="ml-[10px] h-[18px] w-[20px]" fill="none" stroke="#fff" strokeWidth="1.500">
          <path d="M1 6.500h3l4-4v13l-4-4H1zM10.500 6.500c1.200 1.500 1.200 3.500 0 5M13 4c2.500 3 2.500 7 0 10" />
          <path d="M15.500 1.500c4 4.500 4 10.500 0 15" stroke="#777" />
        </svg>
        <svg viewBox="0 0 22 22" className="ml-[10px] h-[22px] w-[21px]" fill="none" stroke="#fff" strokeWidth="1.700">
          <path d="M10 6h6q3 0 3 3v5q0 3-3 3H8M20.500 9.500v4" />
          <path d="M8 0c-5 4-8 7-7 10 1 4 6 3 7 0 .7-3-1-5 0-10z" fill="#fff" stroke="none" />
          <path d="M4 12v5h4" />
        </svg>
        <div className="ml-[20px] text-right leading-[20px]">
          <div className="tracking-[-0.36px]">11:10 PM</div>
          <div className="tracking-[-0.13px]">08-02-2025</div>
        </div>
        <svg viewBox="0 0 18 20" className="mt-[2px] ml-[12px] h-[20px] w-[17px]" fill="#99ebff">
          <path d="M9 0C5 0 3 3 3 7v5l-3 4h18l-3-4V7c0-4-2-7-6-7zM6 17h6c-.5 3-5.500 3-6 0z" />
        </svg>
      </div>
    </div>
  );
}

export default function App() {
  return (
    <div className="h-[1080px] w-[1920px] overflow-hidden font-['Noto_Sans',sans-serif] text-white">
      <TabStrip />
      <Toolbar />
      <Bookmarks />
      <Console />
      <Taskbar />
    </div>
  );
}
